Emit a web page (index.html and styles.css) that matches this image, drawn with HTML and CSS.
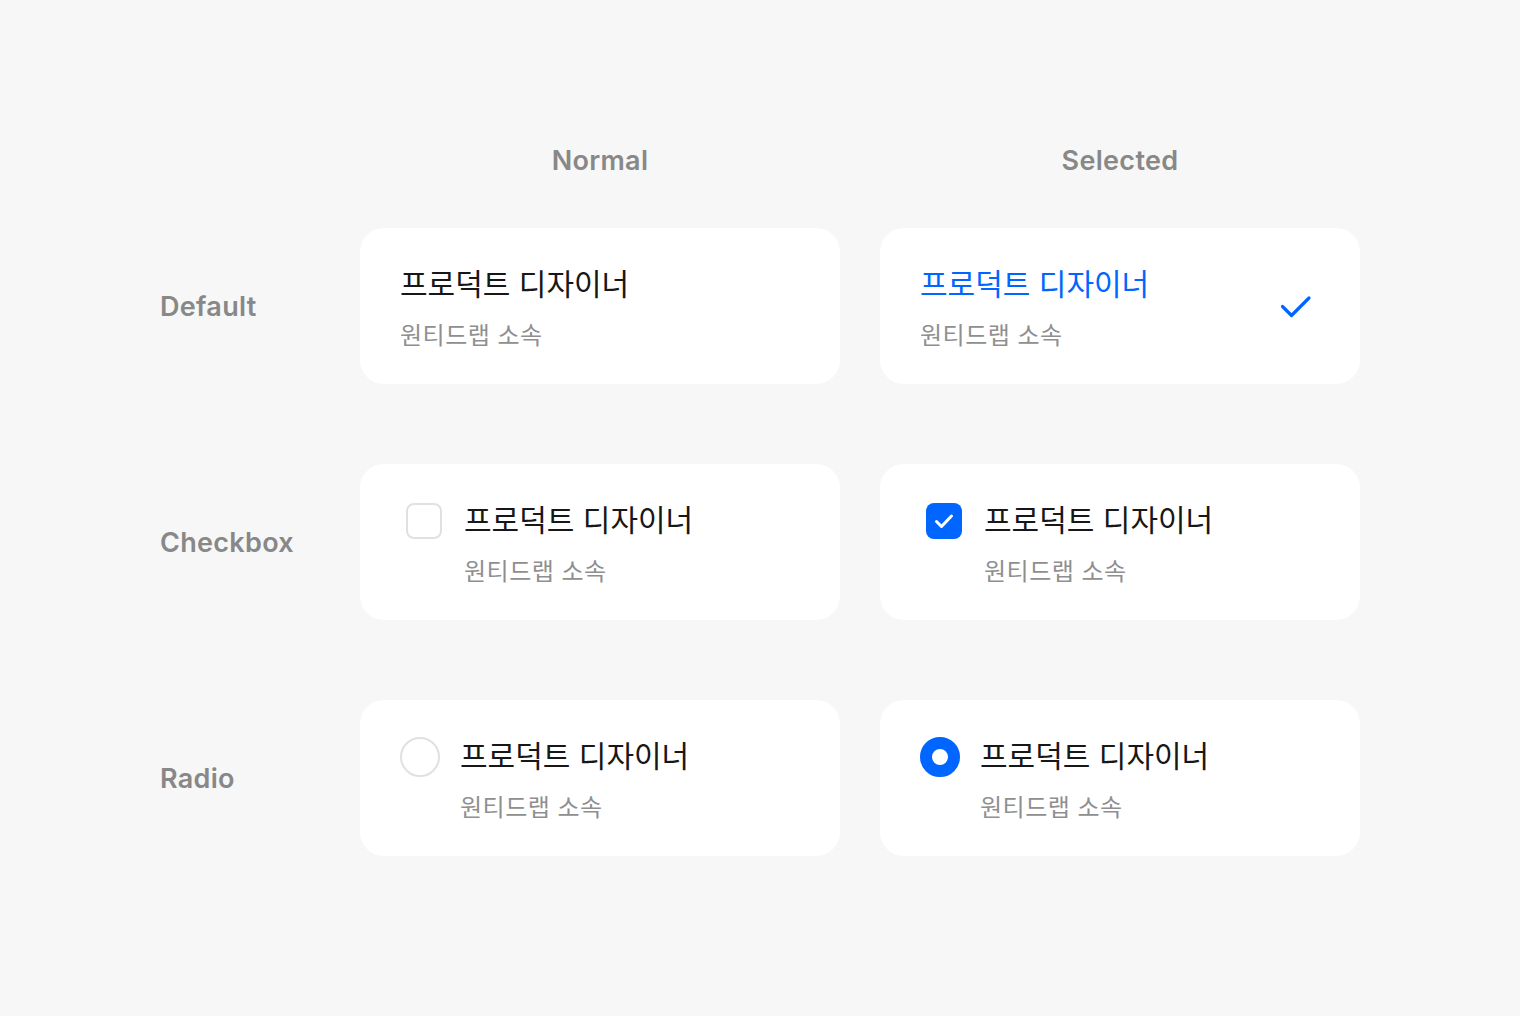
FILE: index.html
```html
<!DOCTYPE html>
<html lang="ko">
<head>
<meta charset="utf-8">
<link rel="stylesheet" href="styles.css">
</head>
<body>
<main class="page">
  <div class="grid head">
    <div></div>
    <div class="col-title">Normal</div>
    <div class="col-title">Selected</div>
  </div>
  <div class="rows">
    <div class="grid row">
      <div class="row-label">Default</div>
      <div class="card">
        <div class="text">
          <div class="title">프로덕트 디자이너</div>
          <div class="sub">원티드랩 소속</div>
        </div>
      </div>
      <div class="card">
        <div class="text">
          <div class="title title-blue">프로덕트 디자이너</div>
          <div class="sub">원티드랩 소속</div>
        </div>
        <div class="check-mark">
          <svg width="48" height="48" viewBox="0 0 48 48"><path d="M10.5 24.5 L19.5 33.5 L37 16" fill="none" stroke="#0066ff" stroke-width="3.2" stroke-linecap="round" stroke-linejoin="round"/></svg>
        </div>
      </div>
    </div>
    <div class="grid row">
      <div class="row-label">Checkbox</div>
      <div class="card card-ctl">
        <div class="ctl ctl-box"><span class="box"></span></div>
        <div class="text">
          <div class="title">프로덕트 디자이너</div>
          <div class="sub">원티드랩 소속</div>
        </div>
      </div>
      <div class="card card-ctl">
        <div class="ctl ctl-box"><span class="box box-on"><svg width="36" height="36" viewBox="0 0 36 36"><path d="M10.5 18.5 L15.5 23.5 L25.5 13" fill="none" stroke="#fff" stroke-width="3" stroke-linecap="round" stroke-linejoin="round"/></svg></span></div>
        <div class="text">
          <div class="title">프로덕트 디자이너</div>
          <div class="sub">원티드랩 소속</div>
        </div>
      </div>
    </div>
    <div class="grid row">
      <div class="row-label">Radio</div>
      <div class="card card-ctl">
        <div class="ctl ctl-radio"><span class="radio"></span></div>
        <div class="text">
          <div class="title">프로덕트 디자이너</div>
          <div class="sub">원티드랩 소속</div>
        </div>
      </div>
      <div class="card card-ctl">
        <div class="ctl ctl-radio"><span class="radio radio-on"></span></div>
        <div class="text">
          <div class="title">프로덕트 디자이너</div>
          <div class="sub">원티드랩 소속</div>
        </div>
      </div>
    </div>
  </div>
</main>
</body>
</html>
```

FILE: styles.css
```css
* { box-sizing: border-box; }
html, body { margin: 0; padding: 0; }
body {
  background: #f7f7f7;
  width: 1520px;
  height: 1016px;
  overflow: hidden;
  font-family: Inter, "Noto Sans CJK KR", sans-serif;
}
.page {
  padding: 141px 0 0 160px;
}
.grid {
  display: grid;
  grid-template-columns: 160px 480px 480px;
  column-gap: 40px;
}
.head {
  height: 40px;
  margin-bottom: 47px;
  align-items: center;
}
.col-title {
  text-align: center;
  font-size: 27px;
  font-weight: 600;
  color: #888888;
  line-height: 40px;
  letter-spacing: 0.3px;
}
.rows {
  display: flex;
  flex-direction: column;
  gap: 80px;
}
.row {
  height: 156px;
  align-items: center;
}
.row-label {
  font-size: 27px;
  font-weight: 600;
  color: #888888;
  line-height: 40px;
  letter-spacing: 0.3px;
  white-space: nowrap;
  padding-top: 2px;
}
.card {
  height: 156px;
  background: #ffffff;
  border-radius: 24px;
  padding: 39px 40px;
  display: flex;
  align-items: flex-start;
}
.text {
  flex: 1;
  display: flex;
  flex-direction: column;
  font-family: "Noto Sans CJK KR", sans-serif;
}
.title {
  font-size: 30px;
  line-height: 30px;
  color: #171717;
}
.title-blue { color: #0066ff; }
.sub {
  margin-top: 21px;
  font-size: 24px;
  line-height: 32px;
  letter-spacing: 0.5px;
  color: #8f8f8f;
}
.check-mark {
  width: 48px;
  height: 48px;
  align-self: center;
  display: flex;
}
.ctl {
  height: 30px;
  margin-top: 3px;
  display: flex;
  align-items: center;
  justify-content: center;
  flex: none;
}
.ctl-box { width: 48px; margin-right: 16px; }
.ctl-radio { width: 40px; margin-right: 20px; }
.box {
  width: 36px;
  height: 36px;
  flex: none;
  border: 2px solid #e1e1e1;
  border-radius: 8px;
  background: #fff;
  display: flex;
  align-items: center;
  justify-content: center;
}
.box-on {
  border: none;
  background: #0066ff;
}
.radio {
  width: 40px;
  height: 40px;
  flex: none;
  border-radius: 50%;
  border: 2px solid #e1e1e1;
  background: #fff;
}
.radio-on {
  border: 12px solid #0066ff;
}
```
